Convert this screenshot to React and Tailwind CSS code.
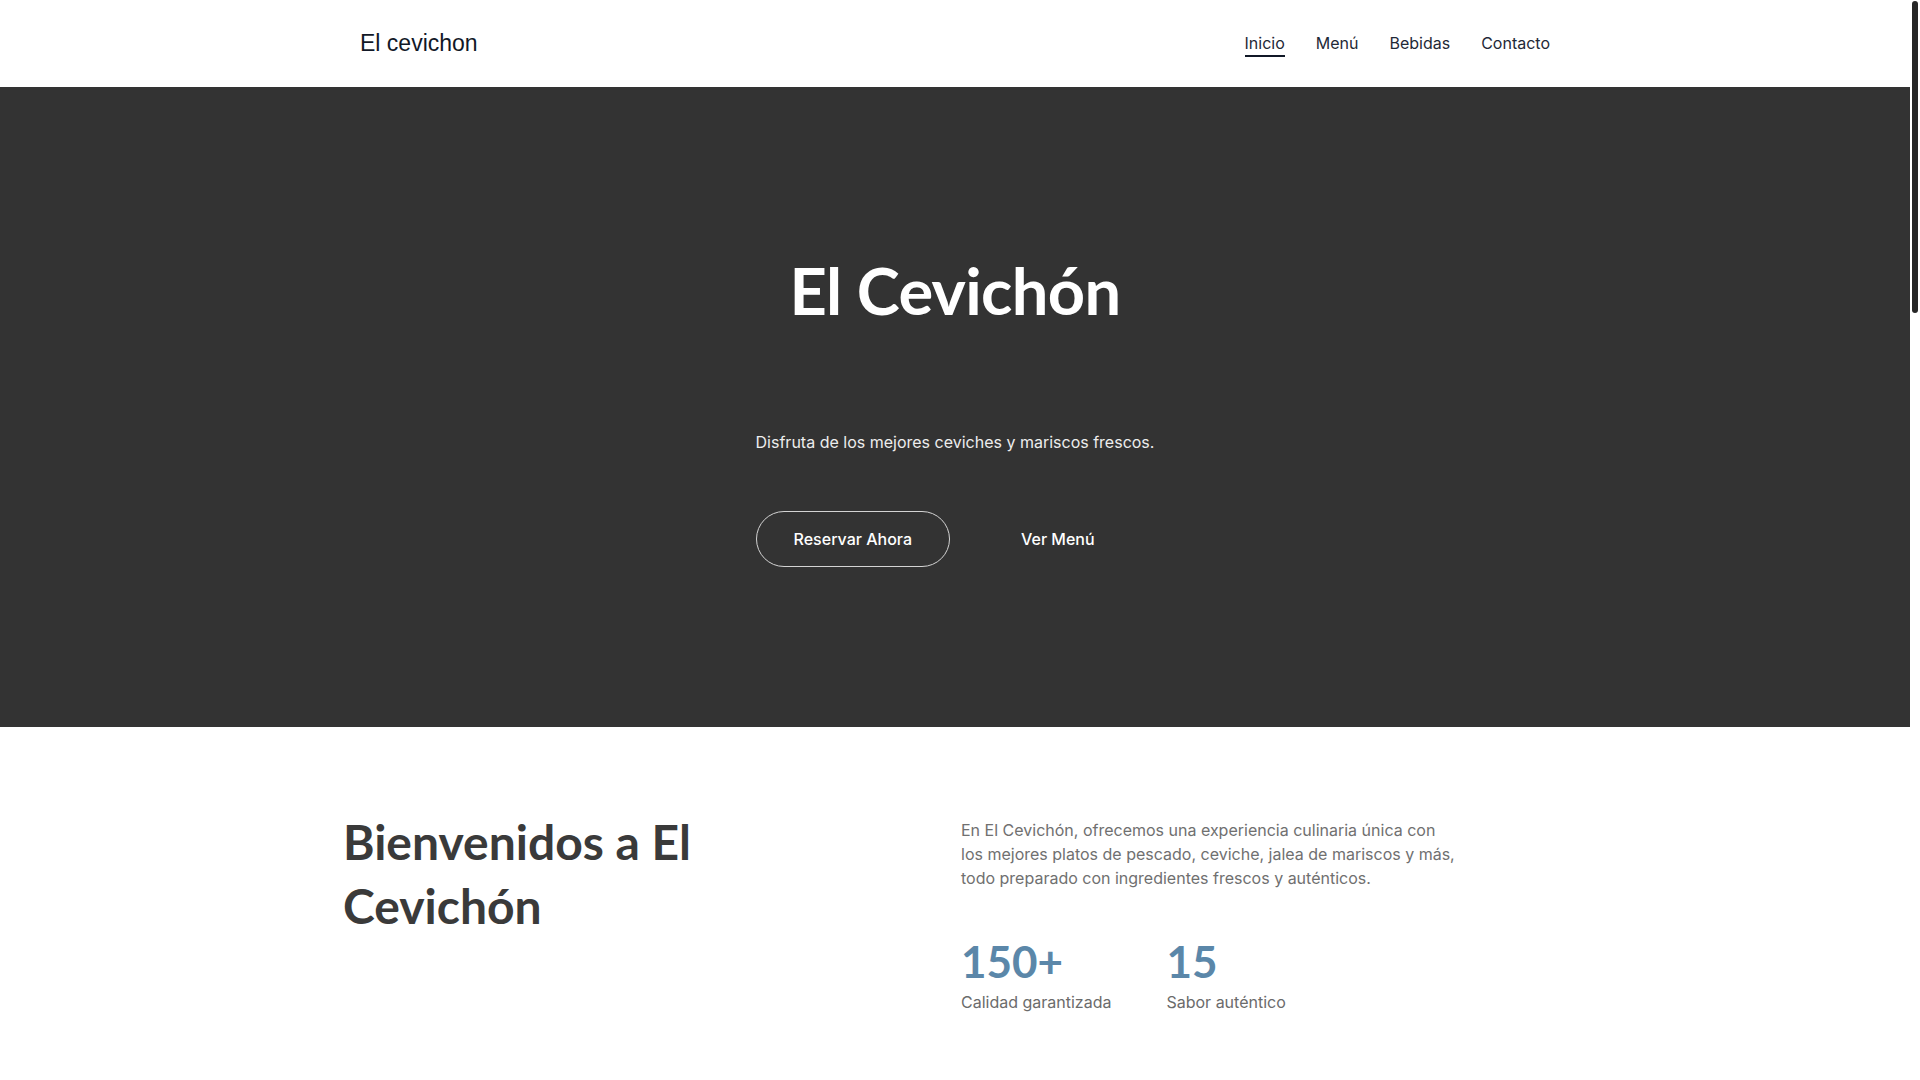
import React from 'react';

const navLinks = ['Inicio', 'Menú', 'Bebidas', 'Contacto'];

const stats = [
  { value: '150+', label: 'Calidad garantizada' },
  { value: '15', label: 'Sabor auténtico' },
];

function Header() {
  return (
    <header className="h-[87px] bg-white">
      <div className="mx-auto flex h-full w-[1190px] items-center justify-between">
        <div className="whitespace-nowrap font-['Liberation_Sans',Arial,sans-serif] text-[23px] leading-none text-[#111827]">
          El cevichon
        </div>
        <nav className="flex items-center gap-[31px] font-['Inter',sans-serif] text-[16px] leading-6 text-[#1f2937]">
          {navLinks.map((link, i) => (
            <a
              key={link}
              href="#"
              className={i === 0 ? 'border-b-2 border-[#111827]' : 'border-b-2 border-transparent'}
            >
              {link}
            </a>
          ))}
        </nav>
      </div>
    </header>
  );
}

function Hero() {
  return (
    <section className="flex h-[640px] flex-col items-center justify-center bg-[#333333] pt-[4px]">
      <h1 className="font-['Lato',sans-serif] text-[65px] font-bold leading-[77px] tracking-[-0.01em] text-white">
        El Cevichón
      </h1>
      <div className="mt-[101px] w-fit font-['Inter',sans-serif]">
        <p className="text-[16px] leading-6 text-[#ededed]">
          Disfruta de los mejores ceviches y mariscos frescos.
        </p>
        <div className="mt-[57px] flex items-center gap-[33px]">
          <button className="h-[56px] rounded-full border border-[#d4d4d4] px-[37px] text-[16px] font-medium text-white">
            Reservar Ahora
          </button>
          <button className="h-[56px] rounded-full border border-transparent px-[37px] text-[16px] font-medium text-white">
            Ver Menú
          </button>
        </div>
      </div>
    </section>
  );
}

function Welcome() {
  return (
    <section className="bg-white pt-[83px]">
      <div className="mx-auto grid w-[1224px] grid-cols-2 gap-3">
        <h2 className="font-['Lato',sans-serif] text-[48px] font-bold leading-[64px] text-[#3a3a3a]">
          Bienvenidos a El
          <br />
          Cevichón
        </h2>
        <div className="pt-[8px] font-['Inter',sans-serif]">
          <p className="w-[500px] text-[16px] leading-6 text-[#707070]">
            En El Cevichón, ofrecemos una experiencia culinaria única con los mejores platos de pescado, ceviche, jalea de mariscos y más, todo preparado con ingredientes frescos y auténticos.
          </p>
          <div className="mt-[47px] flex gap-[55px]">
            {stats.map((s) => (
              <div key={s.value}>
                <div className="mb-[5px] font-['Lato',sans-serif] text-[44px] font-bold leading-[48px] text-[#5b87a9]">
                  {s.value}
                </div>
                <div className="text-[16px] leading-6 text-[#6b6b6b]">{s.label}</div>
              </div>
            ))}
          </div>
        </div>
      </div>
    </section>
  );
}

// page scroll indicator drawn over the right edge
function ScrollBar() {
  return (
    <div className="fixed right-0 top-0 flex h-screen w-[10px] justify-center bg-white pt-[1px]">
      <div className="h-[312px] w-[6px] rounded-full bg-[#262626]" />
    </div>
  );
}

export default function App() {
  return (
    <div className="bg-white">
      <div className="mr-[10px] min-h-[3735px]">
        <Header />
        <Hero />
        <Welcome />
      </div>
      <ScrollBar />
    </div>
  );
}
